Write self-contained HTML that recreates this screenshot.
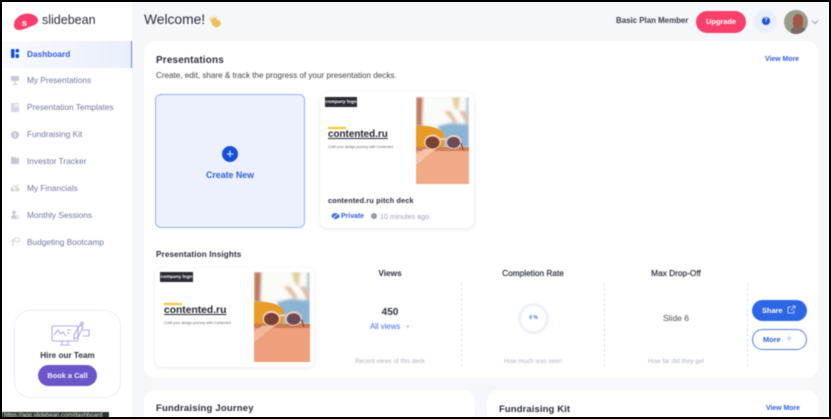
<!DOCTYPE html>
<html><head><meta charset="utf-8">
<style>
*{box-sizing:border-box;margin:0;padding:0}
html,body{width:831px;height:419px;overflow:hidden;background:#000}
body{font-family:"Liberation Sans",sans-serif;position:relative}
#app{position:absolute;left:2px;top:2px;width:827px;height:415px;background:#f5f7fa;overflow:hidden}
#wrap{position:absolute;left:-2px;top:-2px;width:831px;height:419px;filter:blur(.45px)}
.a{position:absolute;white-space:nowrap}
.nav{position:absolute;left:27px;font-size:8.300px;color:#6f7a9c;white-space:nowrap}
.ic{position:absolute;left:10px;width:10px;height:9px}
.card{position:absolute;background:#fff;border-radius:12px}
.b{font-weight:bold}
</style></head><body>
<svg width="0" height="0" style="position:absolute"><defs>
<filter id="f" x="-10%" y="-10%" width="120%" height="120%"><feGaussianBlur stdDeviation="1.200"/></filter>
<filter id="g" x="-10%" y="-10%" width="120%" height="120%"><feGaussianBlur stdDeviation=".35"/></filter>
</defs></svg>
<div id="app"><div id="wrap">
<!-- sidebar -->
<div class="a" style="left:0;top:0;width:132px;height:419px;background:#fff"></div>
<svg class="a" style="left:13px;top:13px" width="26" height="18" viewBox="0 0 26 18"><path d="M1 11C2 4 9 .5 15 .5C21 1 25.500 4 25 8C24.500 12 18 13 14 15C9 17.500 0 19 1 11Z" fill="#f83f6b"/><text x="8.800" y="13" font-size="9.500" font-weight="bold" fill="#fff" font-family="Liberation Sans">s</text></svg>
<div class="a" style="left:42px;top:13px;font-size:12.500px;color:#2b2f3e">slidebean</div>
<div class="a" style="left:2px;top:41px;width:130px;height:27px;background:linear-gradient(90deg,#f9fafe,#e9effc);border-right:1.500px solid #5b87ea"></div>
<svg class="ic" style="top:49px" viewBox="0 0 10 9"><rect x="1" width="3.500" height="9" rx="1" fill="#1650d8"/><rect x="5.500" width="3.500" height="3.500" rx="1" fill="#1650d8"/><rect x="5.500" y="5" width="3.500" height="4" rx="1" fill="#1650d8"/></svg>
<div class="nav b" style="top:49px;color:#2f5fd9">Dashboard</div>
<svg class="ic" style="top:76px" viewBox="0 0 10 9"><path d="M1 0H9V5H1ZM4.500 5H5.500V8H7.500V9H2.500V8H4.500Z" fill="#c6cad6"/></svg>
<div class="nav" style="top:75px">My Presentations</div>
<svg class="ic" style="top:103px" viewBox="0 0 10 9"><rect x="1" width="8" height="9" fill="#d5d8e2"/><rect x="4.500" y="1" width="4" height="3" fill="#eef0f4"/></svg>
<div class="nav" style="top:102px">Presentation Templates</div>
<svg class="ic" style="top:130px" viewBox="0 0 10 9"><circle cx="5" cy="5" r="4" fill="#c3c8d4"/><rect x="4.300" y="3" width="1.400" height="4" fill="#eef0f4"/></svg>
<div class="nav" style="top:129px">Fundraising Kit</div>
<svg class="ic" style="top:156px" viewBox="0 0 10 9"><path d="M1 1H5L6 2H9V8H1Z" fill="#c3c8d4"/></svg>
<div class="nav" style="top:156px">Investor Tracker</div>
<svg class="ic" style="top:183px" viewBox="0 0 10 9"><path d="M1 5L4 3L6 4L9 1M1 8H4V6H1ZM6 8H9V5H6Z" stroke="#c8ccd8" fill="#dde0e8" stroke-width=".8"/></svg>
<div class="nav" style="top:183px">My Financials</div>
<svg class="ic" style="top:210px" viewBox="0 0 10 9"><circle cx="4" cy="2.500" r="2" fill="#c8ccd8"/><path d="M1 9C1 6 2 5 4 5S7 6 7 9Z" fill="#c8ccd8"/><path d="M7 5C9 5 9.500 7 9.500 9H8" fill="#dde0e8"/></svg>
<div class="nav" style="top:210px">Monthly Sessions</div>
<svg class="ic" style="top:237px" viewBox="0 0 10 9"><path d="M3 2V9M1 4H3" stroke="#c8ccd8" fill="none"/><rect x="4.500" y="1" width="5" height="3.500" rx="1" fill="none" stroke="#c8ccd8" stroke-width=".8"/></svg>
<div class="nav" style="top:237px">Budgeting Bootcamp</div>
<!-- hire -->
<div class="a" style="left:14px;top:310px;width:107px;height:88px;border:1px solid #e9edfc;border-radius:16px;background:#fff"></div>
<svg class="a" style="left:50px;top:321px" width="41" height="27" viewBox="0 0 41 27" fill="none" stroke="#9b8be0" stroke-width=".8"><rect x="2" y="5" width="26" height="15" rx="1.500"/><path d="M4 14L8 9L11 13L13 11L16 15M17 9H21M17 12H20M12 20V23M18 20V23M10 24H20"/><path d="M24 14L30 4L33 6L28 16L24 18ZM32 9H39V15H33"/><circle cx="32" cy="2.500" r="1.300"/></svg>
<div class="a b" style="left:14px;top:351px;width:107px;text-align:center;font-size:8.200px;color:#2f3242">Hire our Team</div>
<div class="a b" style="left:38px;top:365px;width:59px;height:21px;border-radius:11px;background:#6c55c8;color:#f3f0ff;font-size:7.400px;text-align:center;line-height:21px">Book a Call</div>
<!-- header -->
<div class="a" style="left:144px;top:12px;font-size:13.800px;color:#2b2f3e">Welcome!</div>
<svg class="a" style="left:207px;top:13px" width="15" height="15" viewBox="0 0 14 15"><path d="M1.500 4L4.500 8L3.500 2.500L6 6.500L6.500 1.500L8 6L9.500 3L9.500 7.500L11 6.500L13.500 10C13 13.500 10 15 7.500 14C5 13 3 8 1.500 4Z" fill="#efc15a"/></svg>
<div class="a b" style="left:616px;top:16px;font-size:7.900px;color:#3b3f4f">Basic Plan Member</div>
<div class="a b" style="left:696px;top:11px;width:50px;height:22px;border-radius:11px;background:#f83f6b;color:#fff;font-size:7.400px;text-align:center;line-height:22px">Upgrade</div>
<div class="a" style="left:754px;top:10px;width:23px;height:23px;border-radius:50%;background:#e9effc"></div>
<div class="a b" style="left:762px;top:17px;width:8px;height:8px;border-radius:50%;background:#1650d8;color:#fff;font-size:6px;line-height:8px;text-align:center">?</div>
<div class="a" style="left:784px;top:10px;width:24px;height:24px;border-radius:50%;background:#9a9c8b;overflow:hidden"><div class="a" style="left:9px;top:4px;width:10px;height:15px;border-radius:5px;background:#a35546"></div><div class="a" style="left:7px;top:17px;width:15px;height:8px;border-radius:6px;background:#7b6a62"></div></div>
<svg class="a" style="left:811px;top:19px" width="8" height="6" viewBox="0 0 8 6"><path d="M1 1.500L4 4.500L7 1.500" fill="none" stroke="#9aa0b0"/></svg>
<!-- main card -->
<div class="card" style="left:144px;top:41px;width:674px;height:337px"></div>
<div class="a b" style="left:156px;top:55px;font-size:9.900px;color:#2b2f3e;letter-spacing:.2px">Presentations</div>
<div class="a" style="left:156px;top:71px;font-size:8.100px;color:#3f4352">Create, edit, share &amp; track the progress of your presentation decks.</div>
<div class="a b" style="left:765px;top:56px;font-size:6.900px;color:#2f5fd9">View More</div>
<!-- create -->
<div class="a" style="left:155px;top:94px;width:150px;height:134px;background:#edf1fd;border:1px dotted #3f6fe0;border-radius:6px"></div>
<div class="a" style="left:222px;top:146px;width:16px;height:16px;border-radius:50%;background:#1650d8;color:#fff;font-size:13px;line-height:15px;text-align:center">+</div>
<div class="a b" style="left:155px;top:170px;width:150px;text-align:center;font-size:8.800px;color:#2f5fd9">Create New</div>
<!-- deck card -->
<div class="a" style="left:320px;top:92px;width:154px;height:136px;background:#fff;border-radius:8px;box-shadow:0 1px 4px rgba(40,50,90,.13)"></div>
<div class="a b" style="left:325px;top:97px;width:32px;height:10px;background:#2a2b33;color:#fff;font-size:4.600px;line-height:10px;text-align:center">company logo</div>
<div class="a" style="left:328px;top:127px;width:18px;height:2px;background:#f6c026"></div>
<div class="a b" style="left:328px;top:128px;font-size:9.900px;line-height:13px;color:#24252c;text-decoration:underline;text-decoration-thickness:.6px">contented.ru</div>
<div class="a" style="left:328px;top:145px;font-size:3.600px;color:#666">Craft your design journey with Contented</div>
<svg class="a" style="left:416px;top:97px" width="53" height="87" viewBox="0 0 53 87" preserveAspectRatio="none">
<rect width="53" height="87" fill="#f4f5f3"/>
<g filter="url(#f)"><rect x="0" y="0" width="8" height="29" fill="#c07a5c"/><rect x="49" y="0" width="4" height="30" fill="#b3c7d6"/><path d="M7 0H50V24L30 26L6 28Z" fill="#fbfbf8"/><path d="M36 0H44L42 14L38 10Z" fill="#e6cf9f"/><path d="M22 29L35 26L53 28V50H28Z" fill="#8ab4d4"/><path d="M28 14L38 26L42 25L34 14Z" fill="#e2bb9f"/><path d="M43 14L50 26L53 24L49 14Z" fill="#e2bb9f"/></g>
<path d="M0 29C10 28 24 30 28 37V52H0Z" fill="#e89b25" filter="url(#g)"/>
<rect x="0" y="52" width="53" height="35" fill="#f1aa88"/><path d="M0 50H53V54H0Z" fill="#cf8058"/><path d="M0 68L20 52H8L0 58Z" fill="#f7c3a4"/>
<g filter="url(#g)"><ellipse cx="16.500" cy="45" rx="8.500" ry="7.500" fill="#f3cdb8"/><ellipse cx="37.500" cy="45" rx="8" ry="7" fill="#f3cdb8"/><path d="M24 41H30V43H24Z" fill="#f3cdb8"/><ellipse cx="16.500" cy="45.500" rx="7" ry="6" fill="#7a4234"/><ellipse cx="37.500" cy="45.500" rx="6.500" ry="5.500" fill="#6a4b58"/><path d="M45 46L47 53" stroke="#9b3f30" stroke-width="1.300"/></g></svg>
<div class="a b" style="left:328px;top:196px;font-size:7.300px;color:#2b2f3e;letter-spacing:.15px">contented.ru pitch deck</div>
<svg class="a" style="left:331px;top:212px" width="9" height="8" viewBox="0 0 9 8"><ellipse cx="4.500" cy="4" rx="4" ry="3" fill="#3f6fe0"/><path d="M1 7L8 1" stroke="#fff" stroke-width=".8"/></svg>
<div class="a b" style="left:341px;top:212px;font-size:6.900px;line-height:9px;color:#2f5fd9">Private</div>
<div class="a" style="left:371px;top:213px;width:6px;height:6px;border-radius:50%;background:#8f98ad"></div>
<div class="a" style="left:380px;top:212px;font-size:7.200px;color:#9aa3ba">10 minutes ago</div>
<!-- insights -->
<div class="a b" style="left:156px;top:250px;font-size:8.100px;color:#2b2f3e;letter-spacing:.15px">Presentation Insights</div>
<div class="a" style="left:155px;top:268px;width:159px;height:99px;background:#fff;border-radius:7px;box-shadow:0 1px 4px rgba(40,50,90,.11)"></div>
<div class="a b" style="left:160px;top:272px;width:33px;height:10px;background:#2a2b33;color:#fff;font-size:4.700px;line-height:10px;text-align:center">company logo</div>
<div class="a" style="left:164px;top:303px;width:18px;height:2px;background:#f6c026"></div>
<div class="a b" style="left:164px;top:304px;font-size:10.300px;line-height:13px;color:#24252c;text-decoration:underline;text-decoration-thickness:.6px">contented.ru</div>
<div class="a" style="left:164px;top:321px;font-size:3.700px;color:#666">Craft your design journey with Contented</div>
<svg class="a" style="left:254px;top:272px" width="56" height="90" viewBox="0 0 53 87" preserveAspectRatio="none">
<rect width="53" height="87" fill="#f4f5f3"/>
<g filter="url(#f)"><rect x="0" y="0" width="8" height="29" fill="#c07a5c"/><rect x="49" y="0" width="4" height="30" fill="#b3c7d6"/><path d="M7 0H50V24L30 26L6 28Z" fill="#fbfbf8"/><path d="M36 0H44L42 14L38 10Z" fill="#e6cf9f"/><path d="M22 29L35 26L53 28V50H28Z" fill="#8ab4d4"/><path d="M28 14L38 26L42 25L34 14Z" fill="#e2bb9f"/><path d="M43 14L50 26L53 24L49 14Z" fill="#e2bb9f"/></g>
<path d="M0 29C10 28 24 30 28 37V52H0Z" fill="#e89b25" filter="url(#g)"/>
<rect x="0" y="52" width="53" height="35" fill="#ee9f7c"/><path d="M0 50H53V54H0Z" fill="#c97a52"/><path d="M0 68L20 52H8L0 58Z" fill="#f3b797"/>
<g filter="url(#g)"><ellipse cx="16.500" cy="45" rx="8.500" ry="7.500" fill="#f3cdb8"/><ellipse cx="37.500" cy="45" rx="8" ry="7" fill="#f3cdb8"/><path d="M24 41H30V43H24Z" fill="#f3cdb8"/><ellipse cx="16.500" cy="45.500" rx="7" ry="6" fill="#7a4234"/><ellipse cx="37.500" cy="45.500" rx="6.500" ry="5.500" fill="#6a4b58"/><path d="M45 46L47 53" stroke="#9b3f30" stroke-width="1.300"/></g></svg>
<!-- stats -->
<div class="a b" style="left:330px;top:268px;width:120px;text-align:center;font-size:8.300px;color:#2b2f3e">Views</div>
<div class="a b" style="left:330px;top:307px;width:120px;text-align:center;font-size:10px;color:#2b2f3e">450</div>
<div class="a" style="left:330px;top:322px;width:120px;text-align:center;font-size:7.800px;color:#3f6fe0">All views <span style="color:#9db4ee;margin-left:3px">+</span></div>
<div class="a" style="left:330px;top:358px;width:120px;text-align:center;font-size:6.200px;color:#aeb4c4">Recent views of this deck</div>
<div class="a" style="left:461px;top:283px;height:84px;border-left:1px dashed #d5e4f7"></div>
<div class="a" style="left:472px;top:268px;width:122px;text-align:center;font-size:8.300px;color:#2b2f3e;-webkit-text-stroke:.2px #2b2f3e">Completion Rate</div>
<div class="a" style="left:518px;top:303px;width:31px;height:31px;border-radius:50%;border:3px solid #edf1fb"></div>
<div class="a b" style="left:518px;top:315px;width:31px;text-align:center;font-size:5px;color:#3f6fe0">0 %</div>
<div class="a" style="left:472px;top:358px;width:122px;text-align:center;font-size:6.300px;color:#aeb4c4">How much was seen</div>
<div class="a" style="left:604px;top:283px;height:84px;border-left:1px dashed #d5e4f7"></div>
<div class="a" style="left:616px;top:268px;width:120px;text-align:center;font-size:8.300px;color:#2b2f3e;-webkit-text-stroke:.2px #2b2f3e">Max Drop-Off</div>
<div class="a" style="left:616px;top:313px;width:120px;text-align:center;font-size:8.500px;color:#4a4d59">Slide 6</div>
<div class="a" style="left:616px;top:358px;width:120px;text-align:center;font-size:6.300px;color:#aeb4c4">How far did they get</div>
<div class="a" style="left:747px;top:283px;height:84px;border-left:1px dashed #d5e4f7"></div>
<div class="a b" style="left:752px;top:300px;width:55px;height:21px;border-radius:11px;background:#2c66e4;color:#fff;font-size:7.400px;line-height:21px;padding-left:10px">Share</div>
<svg class="a" style="left:787px;top:305px" width="9" height="9" viewBox="0 0 9 9" fill="none" stroke="#dbe6ff" stroke-width=".8"><path d="M4 2H1V8H7V5M4 5L8 1M5.500 1H8V3.500"/></svg>
<div class="a b" style="left:752px;top:329px;width:55px;height:21px;border-radius:11px;background:#fff;border:1px solid #4f80ea;color:#2f5fd9;font-size:7.400px;line-height:19px;padding-left:10px">More</div>
<div class="a" style="left:786px;top:333px;font-size:11px;color:#a9bcee;line-height:12px">+</div>
<!-- bottom -->
<div class="card" style="left:144px;top:390px;width:331px;height:40px"></div>
<div class="card" style="left:487px;top:390px;width:331px;height:40px"></div>
<div class="a b" style="left:156px;top:403px;font-size:9.500px;color:#2b2f3e;letter-spacing:.2px">Fundraising Journey</div>
<div class="a b" style="left:499px;top:404px;font-size:9.500px;color:#2b2f3e;letter-spacing:.1px">Fundraising Kit</div>
<div class="a b" style="left:766px;top:405px;font-size:6.900px;color:#2f5fd9">View More</div>
<!-- status -->
<div class="a" style="left:2px;top:412px;width:107px;height:6px;background:#26352b;color:#e8ece8;font-size:6px;line-height:9px;padding-left:2px;overflow:hidden">https://app.slidebean.com/dashboard</div>
</div></div>
</body></html>
